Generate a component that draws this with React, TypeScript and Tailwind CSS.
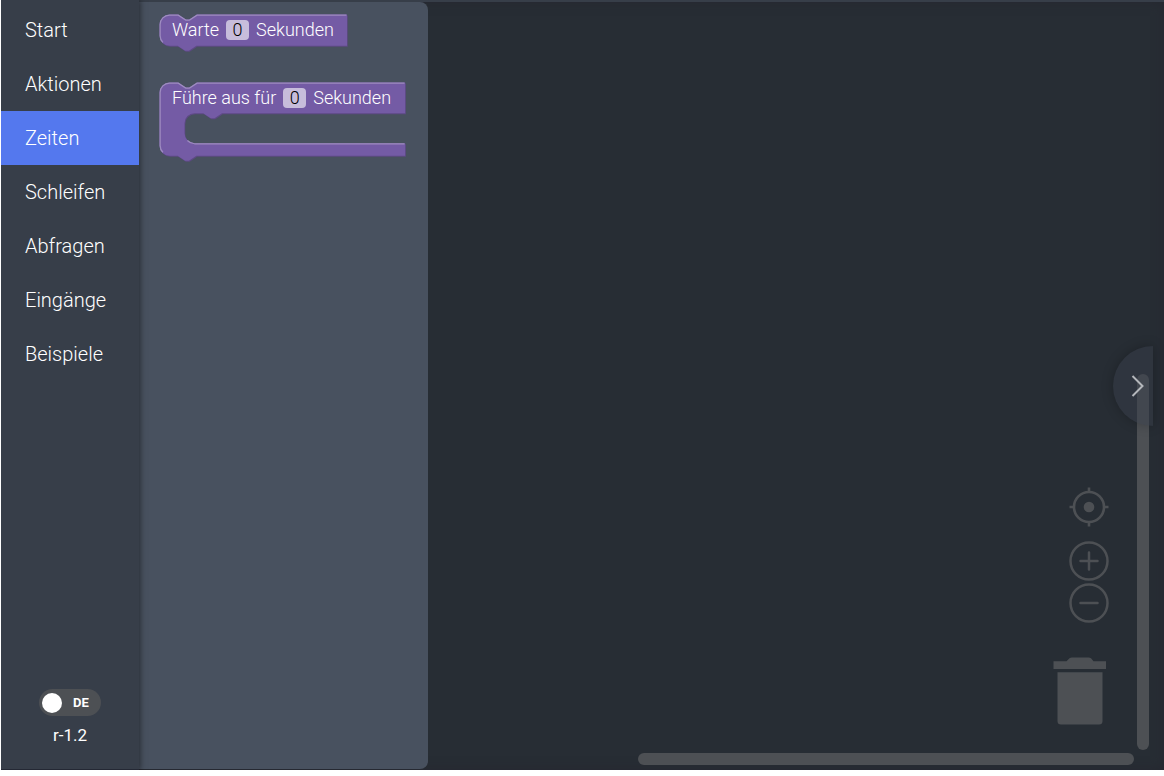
import { useState } from 'react';

const categories = ['Start', 'Aktionen', 'Zeiten', 'Schleifen', 'Abfragen', 'Eingänge', 'Beispiele'];

interface BlockProps {
    before: string;
    after: string;
    width: number;
    loop?: boolean;
}

// Block outlines are in workspace units, drawn at a zoom of 1.25
function Block({ before, after, width, loop }: BlockProps) {
    const notch = 'l 6,4 3,0 6,-4';
    const tail = 'H 29.5 l -6,4 -3,0 -6,-4 H 8 a 8,8 0 0,1 -8,-8';
    const inner = 'H 50 l -6,4 -3,0 -6,-4 h -7 a 8,8 0 0,0 -8,8 v 8 a 8,8 0 0,0 8,8';
    const body = loop ? `v 24.5 ${inner} H ${width} v 10 ${tail}` : `v 25 ${tail}`;
    const path = `m 0,8 A 8,8 0 0,1 8,0 H 15 ${notch} H ${width} ${body} z`;
    const bottom = loop ? 58.5 : 25;
    const unitsHigh = loop ? 66 : 32;

    return (
        <div className="grid justify-start">
            <svg
                className="col-start-1 row-start-1"
                width={(width + 2) * 1.25}
                height={unitsHigh * 1.25}
                viewBox={`-0.4 -0.4 ${width + 2} ${unitsHigh}`}
                aria-hidden="true"
            >
                <path d={path} fill="#5d4984" transform="translate(0.6,0.8)" />
                <path d={path} fill="#745ba5" />
                <g fill="none" stroke="#9e8cc0" strokeWidth="1">
                    <path d={`M 2.7,${bottom - 2.7} A 7.5,7.5 0 0,1 0.5,${bottom - 8} V 8 A 7.5,7.5 0 0,1 8,0.5 H 15 ${notch} H ${width - 0.5}`} />
                    {loop && <path d={`M 22.3,46.4 A 8.5,8.5 0 0,0 28,49 H ${width - 0.5}`} />}
                </g>
            </svg>
            <label className="col-start-1 row-start-1 flex h-8 items-center gap-[7px] self-start pl-[13px] text-lg font-light text-white">
                <span>{before}</span>
                <input
                    type="text"
                    defaultValue="0"
                    className="h-5 w-[23px] rounded bg-[#c7bddb] text-center text-black outline-none"
                />
                <span>{after}</span>
            </label>
        </div>
    );
}

function Controls() {
    return (
        <div className="flex flex-col items-end">
            <button type="button" aria-label="Zentrieren" className="mb-3.5">
                <svg width="40" height="40" viewBox="0 0 40 40" fill="none" stroke="#4d5054" strokeWidth="2.6">
                    <circle cx="20" cy="20" r="15" />
                    <circle cx="20" cy="20" r="5.3" fill="#4d5054" stroke="none" />
                    <path d="M20 0.5V5M20 35v4.5M0.5 20H5M35 20h4.5" />
                </svg>
            </button>
            <button type="button" aria-label="Vergrößern" className="mb-0.5">
                <svg width="40" height="40" viewBox="0 0 40 40" fill="none" stroke="#4d5054" strokeWidth="2.5">
                    <circle cx="20" cy="20" r="18.5" />
                    <path d="M11.5 20h17M20 11.5v17" strokeLinecap="round" />
                </svg>
            </button>
            <button type="button" aria-label="Verkleinern" className="mb-8">
                <svg width="40" height="40" viewBox="0 0 40 40" fill="none" stroke="#4d5054" strokeWidth="2.5">
                    <circle cx="20" cy="20" r="18.5" />
                    <path d="M11.5 20h17" strokeLinecap="round" />
                </svg>
            </button>
            <svg width="56" height="70" viewBox="0 0 56 70" fill="#4d5054" role="img" aria-label="Papierkorb">
                <path d="M0.5 6.3H13.5L16.5 3.2Q17.5 2.4 19 2.4H35.5Q37 2.4 38 3.2L40.5 6.3H53V14H0.5Z" />
                <path d="M4.5 17.3H49.5V66Q49.5 69.6 46 69.6H8Q4.5 69.6 4.5 66Z" />
            </svg>
        </div>
    );
}

export default function App() {
    const [active, setActive] = useState('Zeiten');
    const [german, setGerman] = useState(false);

    return (
        <div className="h-screen bg-white pb-1.5 pl-px font-['Roboto',sans-serif]">
            <div className="flex h-full overflow-hidden bg-[#373e49]">
                {/* Toolbox */}
                <aside className="z-10 flex w-[138px] shrink-0 flex-col border-b border-[#242834] bg-[#373e49] pt-[3px] shadow-[1px_0_6px_rgba(0,0,0,0.5)]">
                    <nav className="flex flex-col">
                        {categories.map((name) => (
                            <button
                                key={name}
                                type="button"
                                onClick={() => setActive(name)}
                                className={`h-[54px] pl-6 text-left text-xl font-light text-white ${name === active ? 'bg-[#5478ee]' : ''}`}
                            >
                                {name}
                            </button>
                        ))}
                    </nav>
                    <div className="mt-auto flex flex-col items-center gap-[7px] pb-[22px]">
                        <label className="flex h-[27px] w-[62px] cursor-pointer items-center gap-[11px] rounded-full bg-[#4d5054] pl-[3px]">
                            <input
                                type="checkbox"
                                checked={german}
                                onChange={(e) => setGerman(e.target.checked)}
                                className="size-5 appearance-none rounded-full bg-white"
                            />
                            <span className="text-[13px] font-bold text-white">DE</span>
                        </label>
                        <span className="text-[17px] leading-6 text-white">r-1.2</span>
                    </div>
                </aside>

                {/* Workspace */}
                <main className="mt-0.5 flex min-w-0 flex-1 bg-[#272d34] shadow-[inset_0_0_12px_#262730]">
                    <section className="mb-px flex w-[289px] shrink-0 flex-col gap-7 rounded-r-lg bg-[#48515f] pl-5 pt-3">
                        <Block before="Warte" after="Sekunden" width={150} />
                        <Block before="Führe aus für" after="Sekunden" width={196.5} loop />
                    </section>

                    <div className="relative flex min-w-0 flex-1 pr-[15px]">
                        <div className="flex flex-1 flex-col">
                            <div className="flex flex-1 items-end justify-end pb-7 pr-7">
                                <Controls />
                            </div>
                            <div className="mb-[5px] mr-[3px] h-3 w-[70%] self-end rounded-full bg-[#4d5054]" />
                        </div>
                        <div className="mb-5 h-[49%] w-3 self-end rounded-full bg-[#4d5054]" />

                        <button
                            type="button"
                            aria-label="Seitenleiste öffnen"
                            className="absolute right-[11px] top-1/2 flex h-20 w-10 -translate-y-1/2 items-center justify-end rounded-l-full bg-[#373e49]/50 pr-2 shadow-[0_0_12px_rgba(0,0,0,0.25)]"
                        >
                            <svg width="14" height="22" viewBox="0 0 14 22" fill="none" stroke="#b4b7bb" strokeWidth="2">
                                <path d="M1.5 1L11.5 11L1.5 21" />
                            </svg>
                        </button>
                    </div>
                </main>
            </div>
        </div>
    );
}
